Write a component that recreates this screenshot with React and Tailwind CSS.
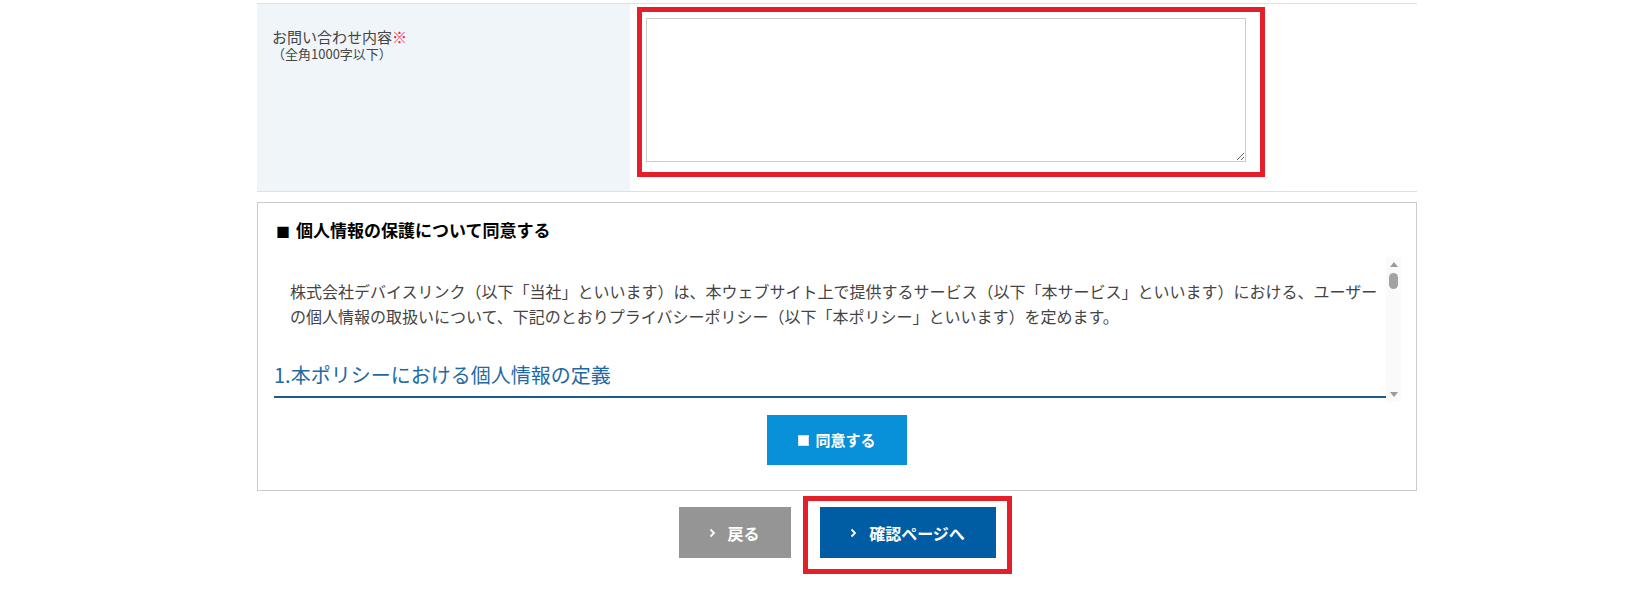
import React from 'react';

const policySections = [
  {
    title: '1.本ポリシーにおける個人情報の定義',
    body: '本ポリシーにおいて「個人情報」とは、個人情報の保護に関する法律に規定される生存する個人に関する情報であって、氏名、生年月日、住所、電話番号、メールアドレスその他の記述等により特定の個人を識別することができるものをいいます。',
  },
  {
    title: '2.個人情報の収集方法',
    body: '当社は、ユーザーが本サービスをご利用になる際、またはお問い合わせをいただく際に、氏名、会社名、電話番号、メールアドレス等の個人情報をお尋ねすることがあります。',
  },
  {
    title: '3.個人情報の利用目的',
    body: '当社は、お問い合わせへの回答、本サービスの提供・運営、本サービスに関するご案内、その他これらに付随する目的のために個人情報を利用いたします。',
  },
];

function Chevron() {
  return (
    <svg width="7" height="10" viewBox="0 0 7 10" fill="none" className="shrink-0">
      <path d="M1.5 1.5 L5 5 L1.5 8.5" stroke="white" strokeWidth="1.8" />
    </svg>
  );
}

// scrollbar drawn by hand (the page's own scrollbars are hidden when photographed)
function FakeScrollbar() {
  return (
    <div className="w-[15px] shrink-0 bg-[#fafafa] flex flex-col items-center">
      <svg width="8" height="5" viewBox="0 0 8 5" className="mt-[5px]">
        <path d="M4 0 L8 5 L0 5 Z" fill="#9a9a9a" />
      </svg>
      <div className="mt-[6px] w-[9px] h-[16px] rounded-full bg-[#a3a3a3]" />
      <div className="flex-1" />
      <svg width="8" height="5" viewBox="0 0 8 5" className="mb-[5px]">
        <path d="M0 0 L8 0 L4 5 Z" fill="#9a9a9a" />
      </svg>
    </div>
  );
}

export default function App() {
  return (
    <div className="min-h-[591px] bg-white text-[#333] font-['Noto_Sans_CJK_JP','Noto_Sans',sans-serif]">
      <div className="ml-[257px] w-[1160px] pt-[3px]">
        {/* form row */}
        <div className="flex h-[189px] border-y border-[#dde1e4]">
          <div className="w-[373px] shrink-0 bg-[#f0f5f9] pl-[15px] pt-[24px]">
            <div className="text-[15px] leading-[18px] text-[#444]">
              お問い合わせ内容<span className="text-[#e8333a]">※</span>
            </div>
            <div className="text-[13px] leading-[16px] text-[#444]">（全角1000字以下）</div>
          </div>
          <div className="flex-1 pl-4 pt-[14px]">
            <div className="relative w-[600px] h-[144px]">
              <textarea className="block w-[600px] h-[144px] border border-[#ccc] bg-white outline-none" />
              <span className="pointer-events-none absolute left-[-9px] top-[-11px] right-[-19px] bottom-[-15px] border-[5px] border-[#e3202a]" />
            </div>
          </div>
        </div>

        {/* agreement box */}
        <div className="mt-[10px] border border-[#ccc] h-[289px] pt-[15px]">
          <h3 className="ml-[18px] text-[17px] leading-[24px] font-bold text-black">
            <span className="text-[14px] mr-[6px]">■</span>個人情報の保護について同意する
          </h3>
          <div className="mt-[14px] ml-4 mr-[15px] h-[145px] flex">
            <div className="flex-1 overflow-hidden">
              <p className="pt-[22px] pl-4 pr-2 text-[16px] leading-[25px] text-[#444]">
                株式会社デバイスリンク（以下「当社」といいます）は、本ウェブサイト上で提供するサービス（以下「本サービス」といいます）における、ユーザーの個人情報の取扱いについて、下記のとおりプライバシーポリシー（以下「本ポリシー」といいます）を定めます。
              </p>
              {policySections.map(s => (
                <div key={s.title}>
                  <h4 className="mt-[31px] text-[20px] leading-[30px] pb-[6px] text-[#1f6aa5] border-b-2 border-[#1d5a8a]">{s.title}</h4>
                  <p className="mt-4 pl-4 pr-2 text-[16px] leading-[25px] text-[#444]">{s.body}</p>
                </div>
              ))}
            </div>
            <FakeScrollbar />
          </div>
          <div className="mt-[13px] flex justify-center">
            <button className="w-[140px] h-[50px] bg-[#0890d8] text-white text-[15px] leading-[20px] font-bold flex items-center justify-center gap-[6px]">
              <span className="inline-block w-[11px] h-[11px] bg-white border border-[#ddd]" />
              <span>同意する</span>
            </button>
          </div>
        </div>

        {/* buttons */}
        <div className="mt-[16px] flex justify-center gap-[29px]">
          <button className="w-[112px] h-[51px] bg-[#959595] text-white text-[16px] leading-[20px] font-bold flex items-center justify-center gap-[11px]">
            <Chevron />
            <span>戻る</span>
          </button>
          <div className="relative">
            <button className="w-[176px] h-[51px] bg-[#005ca3] text-white text-[16px] leading-[20px] font-bold flex items-center justify-center gap-[12px]">
              <Chevron />
              <span>確認ページへ</span>
            </button>
            <span className="pointer-events-none absolute left-[-17px] top-[-11px] right-[-16px] bottom-[-16px] border-[5px] border-[#e3202a]" />
          </div>
        </div>
      </div>
    </div>
  );
}
